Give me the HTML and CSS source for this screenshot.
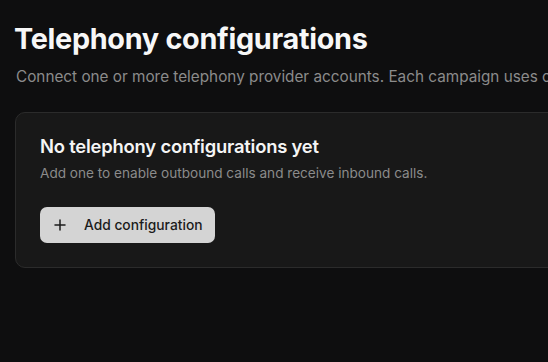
FILE: index.html
```html
<!DOCTYPE html>
<html>
<head>
<meta charset="utf-8">
<link rel="stylesheet" href="styles.css">
</head>
<body>
<main class="page">
  <header class="page-header">
    <h1 class="page-title">Telephony configurations</h1>
    <p class="page-subtitle">Connect one or more telephony provider accounts. Each campaign uses one configuration for outbound and inbound calls.</p>
  </header>
  <section class="card">
    <h2 class="card-title">No telephony configurations yet</h2>
    <p class="card-subtitle">Add one to enable outbound calls and receive inbound calls.</p>
    <button class="btn">
      <svg class="btn-icon" width="16" height="16" viewBox="0 0 16 16" fill="none" stroke="currentColor" stroke-width="1.5" stroke-linecap="round"><path d="M8 3v10M3 8h10"/></svg>
      <span>Add configuration</span>
    </button>
  </section>
</main>
</body>
</html>
```
FILE: styles.css
```css
html, body {
  margin: 0;
  padding: 0;
  background: #0e0e0f;
  overflow: hidden;
  height: 100%;
}
body {
  font-family: Inter, "Noto Sans", sans-serif;
  color: #f2f2f2;
}
.page {
  width: 900px;
  padding: 22px 16px;
  box-sizing: content-box;
}
.page-header {
  margin-bottom: 24px;
}
.page-title {
  margin: 0 0 0 -2px;
  font-size: 28.8px;
  font-weight: 700;
  line-height: 34px;
  letter-spacing: -0.3px;
  color: #f7f7f7;
}
.page-subtitle {
  margin: 10px 0 0;
  font-size: 15.3px;
  line-height: 22px;
  color: #8b8b8b;
  white-space: nowrap;
}
.card {
  background: #181818;
  border: 1px solid #2b2b2b;
  border-radius: 10px;
  padding: 20px 24px 24px;
  margin-left: -1px;
}
.card-title {
  margin: 0;
  font-size: 18.4px;
  font-weight: 600;
  line-height: 26px;
  letter-spacing: -0.2px;
  color: #f5f5f5;
}
.card-subtitle {
  margin: 4px 0 0;
  font-size: 13.6px;
  line-height: 20px;
  color: #8b8b8b;
}
.btn {
  margin-top: 24px;
  display: inline-flex;
  align-items: center;
  gap: 16px;
  height: 36px;
  padding: 0 12px 0 12px;
  background: #d4d4d4;
  color: #1b1b1b;
  border: none;
  border-radius: 7px;
  font-family: inherit;
  font-size: 13.8px;
  font-weight: 500;
}
.btn-icon {
  display: block;
}
```
